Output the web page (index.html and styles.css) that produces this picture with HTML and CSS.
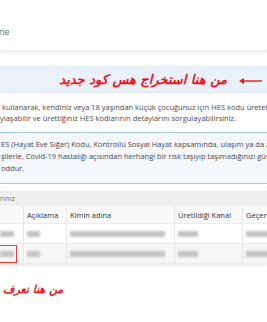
FILE: index.html
```html
<!DOCTYPE html>
<html>
    <head>
        <title>HES Kodu</title>
        <link rel="stylesheet" href="styles.css">
    </head>
    <body>
        <div class="page">
            <div class="header">
                <span class="crumb">ne</span>
            </div>
            <div class="band">
                <span class="ar-note">من هنا استخراج هس كود جديد</span>
                <svg class="arrow" width="24" height="8" viewBox="0 0 24 8">
                    <path d="M2 4 H23" stroke="#e8161c" stroke-width="1.4"/>
                    <path d="M0 4 L5 1 L5 7 Z" fill="#e8161c"/>
                </svg>
            </div>
            <div class="intro">
                <div class="line">&nbsp;kullanarak, kendiniz veya 18 yaşından küçük çocuğunuz için HES kodu üretebilirsiniz.</div>
                <div class="line">ylaşabilir ve ürettiğiniz HES kodlarının detaylarını sorgulayabilirsiniz.</div>
            </div>
            <div class="info">
                <div class="line">ES (Hayat Eve Sığar) Kodu, Kontrollü Sosyal Hayat kapsamında, ulaşım ya da ziyaret</div>
                <div class="line">şilerle, Covid-19 hastalığı açısından herhangi bir risk taşıyıp taşımadığınızı güvenle</div>
                <div class="line">oddur.</div>
            </div>
            <div class="codes">
                <div class="codes-title">rınız</div>
                <div class="table">
                    <div class="row head">
                        <div class="cell c1"></div>
                        <div class="cell c2">Açıklama</div>
                        <div class="cell c3">Kimin adına</div>
                        <div class="cell c4">Üretildiği Kanal</div>
                        <div class="cell c5">Geçerlilik</div>
                    </div>
                    <div class="row">
                        <div class="cell c1 flush"><span class="blur w14"></span></div>
                        <div class="cell c2"><span class="blur w13"></span></div>
                        <div class="cell c3"><span class="blur w95"></span></div>
                        <div class="cell c4"><span class="blur w20"></span></div>
                        <div class="cell c5"><span class="blur w30"></span></div>
                    </div>
                    <div class="row alt">
                        <div class="cell c1 flush"><span class="mark"><span class="blur w14"></span></span></div>
                        <div class="cell c2"><span class="blur w13"></span></div>
                        <div class="cell c3"><span class="blur w95"></span></div>
                        <div class="cell c4"><span class="blur w20"></span></div>
                        <div class="cell c5"><span class="blur w30"></span></div>
                    </div>
                </div>
            </div>
            <div class="ar-bottom">من هنا نعرف</div>
        </div>
    </body>
</html>
```

FILE: styles.css
```css
body {
    margin: 0;
    background-color: white;
    font-family: "Open Sans", "DejaVu Sans", sans-serif;
    color: #555;
    overflow: hidden;
}
.page {
    width: 267px;
    height: 322px;
    overflow: hidden;
}
.header {
    height: 51px;
    padding-top: 18px;
    box-sizing: border-box;
    box-shadow: 0 2px 3px 0 rgba(0, 0, 0, 0.08);
    border-bottom: 1px solid #eee;
}
.crumb {
    font-size: 9px;
    color: #777;
    margin-left: -1px;
}
.band {
    margin-top: 15px;
    height: 26px;
    background-color: #ebf1f9;
    border-bottom: 1px solid #e2e8f0;
    display: flex;
    align-items: center;
    justify-content: flex-end;
    white-space: nowrap;
}
.ar-note {
    font-family: "DejaVu Sans", sans-serif;
    font-weight: bold;
    font-style: italic;
    font-size: 13px;
    letter-spacing: 0.6px;
    color: #e8161c;
    direction: rtl;
}
.arrow {
    margin-left: 12px;
    margin-right: 4px;
    margin-top: 3px;
}
.intro {
    padding-top: 9px;
    font-size: 7.5px;
    line-height: 11px;
    white-space: nowrap;
    color: #4a4a4a;
}
.info {
    margin: 8px -4px 0 -4px;
    padding: 5px 4px 9px 4px;
    background-color: #f4f8fd;
    border: 1px solid #a9c5ea;
    font-size: 7.5px;
    line-height: 12px;
    white-space: nowrap;
    color: #4a4a4a;
}
.codes {
    margin-top: 7px;
    box-shadow: 0 2px 3px 0 rgba(0, 0, 0, 0.08);
}
.codes-title {
    height: 15px;
    line-height: 15px;
    background-color: #efefef;
    font-size: 7.5px;
    color: #777;
}
.table {
    font-size: 7.5px;
    color: #333;
}
.row {
    display: flex;
    height: 19px;
    align-items: center;
    border-bottom: 1px solid #ececec;
    white-space: nowrap;
}
.row.head {
    height: 17px;
    background-color: #fafafa;
}
.row.alt {
    background-color: #f6f6f6;
}
.cell {
    flex-shrink: 0;
    height: 100%;
    display: flex;
    align-items: center;
    padding-left: 3px;
    box-sizing: border-box;
    border-right: 1px solid #e6e6e6;
    overflow: hidden;
}
.c1 { width: 24px; }
.c2 { width: 43px; }
.c3 { width: 108px; }
.c4 { width: 68px; }
.c5 { width: 40px; border-right: none; }
.flush {
    padding-left: 0;
}
.mark {
    display: flex;
    align-items: center;
    width: 17px;
    height: 18px;
    box-sizing: border-box;
    border: 1px solid #e23b3b;
    border-left: none;
}
.blur {
    display: inline-block;
    height: 6px;
    background-color: #c4c4c4;
    filter: blur(1px);
}
.w13 { width: 13px; }
.w14 { width: 14px; }
.w20 { width: 20px; }
.w30 { width: 30px; }
.w95 { width: 95px; }
.ar-bottom {
    margin-top: 19px;
    margin-left: 3px;
    font-family: "DejaVu Sans", sans-serif;
    font-weight: bold;
    font-style: italic;
    font-size: 11px;
    color: #e8161c;
    direction: rtl;
    width: 62px;
    text-align: left;
}
```
